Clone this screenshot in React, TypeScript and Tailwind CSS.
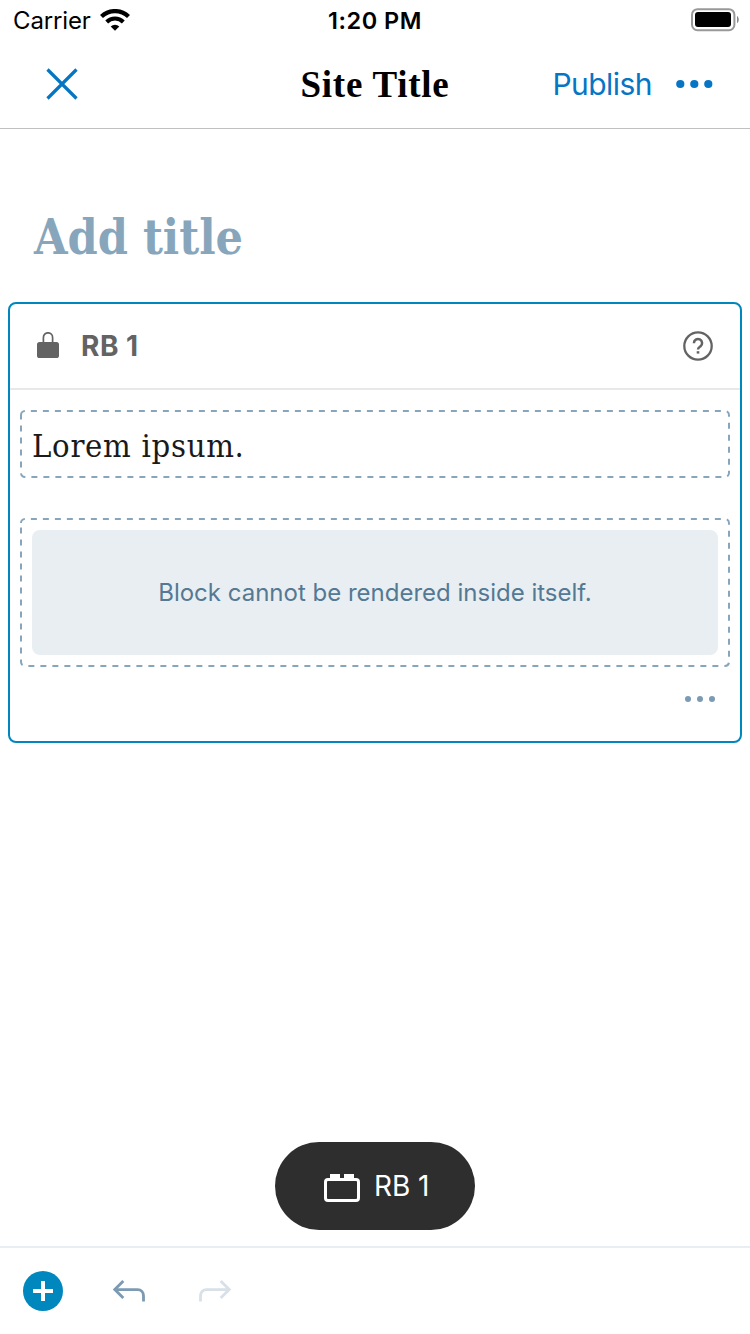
import React from 'react';

function DashedFrame({ width, height }: { width: number; height: number }) {
  const r = 4;
  const d = `M1 ${1 + r}a${r} ${r} 0 0 1 ${r} ${-r}H${width - 1 - r}a${r} ${r} 0 0 1 ${r} ${r}V${height - 1 - r}a${r} ${r} 0 0 1 ${-r} ${r}H${1 + r}a${r} ${r} 0 0 1 ${-r} ${-r}Z`;
  return (
    <svg className="pointer-events-none absolute inset-0" width={width} height={height} fill="none">
      <path d={d} stroke="#87a6bc" strokeWidth="2" strokeDasharray="6 6" />
    </svg>
  );
}

function StatusBar() {
  return (
    <div className="grid h-10 grid-cols-3 items-center pl-[13px] pr-[11px] text-black">
      <div className="flex items-center">
        <span className="w-[87px] pt-[2px] text-[24px] leading-[38px] tracking-[-0.15px]">Carrier</span>
        <svg width="30" height="22" viewBox="0 0 30 22" fill="none" stroke="#000">
          <path d="M1.5 7.6A19.2 19.2 0 0 1 28.5 7.6" strokeWidth="4.2" />
          <path d="M6.7 13A11.7 11.7 0 0 1 23.3 13" strokeWidth="4" />
          <path d="M15 21.8 10.7 17.5A6.1 6.1 0 0 1 19.3 17.5Z" fill="#000" stroke="none" />
        </svg>
      </div>
      <div className="pr-[2px] pt-[2px] text-center text-[23.5px] font-semibold leading-[38px] tracking-[0.5px]">1:20 PM</div>
      <div className="flex justify-end">
        <svg width="48" height="24" viewBox="0 0 48 24" fill="none">
          <rect x="1" y="1.2" width="42.4" height="21" rx="5.5" stroke="#999" strokeWidth="2" />
          <rect x="4" y="4" width="36" height="15" rx="3" fill="#000" />
          <path d="M46 8c2.3 1.2 2.3 6 0 7.2z" fill="#888" />
        </svg>
      </div>
    </div>
  );
}

function NavBar() {
  return (
    <header className="grid h-[89px] grid-cols-[1fr_auto_1fr] items-center border-b border-[#c0c0c0] pl-[37px] pr-[37px]">
      <button className="flex pl-[9px]" aria-label="Close">
        <svg width="32" height="32" viewBox="0 0 32 32" fill="none" stroke="#0675c4" strokeWidth="3.2">
          <path d="M1.5 1.5 30.5 30.5M30.5 1.5 1.5 30.5" />
        </svg>
      </button>
      <h1 className="whitespace-nowrap pt-[2px] font-['Liberation_Serif',serif] text-[37px] font-bold leading-[48px] tracking-[0.75px] text-black">
        Site Title
      </h1>
      <div className="flex items-center justify-end gap-[24px] text-[#0675c4]">
        <button className="text-[30px] leading-[40px] tracking-[-0.55px]">Publish</button>
        <svg width="37" height="10" viewBox="0 0 37 10" fill="currentColor">
          <circle cx="4.3" cy="5" r="4.1" />
          <circle cx="18.3" cy="5" r="4.1" />
          <circle cx="32.3" cy="5" r="4.1" />
        </svg>
      </div>
    </header>
  );
}

function ReusableBlock() {
  return (
    <section className="mx-2 mt-[29px] flex h-[441px] flex-col rounded-[8px] border-2 border-[#0087be]">
      <div className="flex h-[86px] items-center border-b-2 border-[#e8e8e8] pl-[27px] pr-[27px] text-[#636363]">
        <svg className="mb-[2px]" width="22" height="26" viewBox="0 0 22 26" fill="none">
          <path d="M6.4 11V5.4a4.6 4.6 0 0 1 4.6-4.6 4.6 4.6 0 0 1 4.6 4.6V11" stroke="currentColor" strokeWidth="1.7" />
          <rect y="10" width="22" height="16" rx="2.6" fill="currentColor" />
        </svg>
        <span className="ml-[22px] flex-1 text-[28px] font-bold leading-[40px] tracking-[0.5px]">RB 1</span>
        <svg width="30" height="30" viewBox="0 0 30 30" fill="none" stroke="currentColor">
          <circle cx="15" cy="15" r="13.7" strokeWidth="2.3" />
          <path d="M10.9 12.2a4.1 4.1 0 1 1 6.5 3.2c-1.5 1-2.4 1.5-2.4 3.2" strokeWidth="2.5" />
          <path d="M13.7 20.2h2.6v2.4h-2.6z" fill="currentColor" stroke="none" />
        </svg>
      </div>
      <div className="flex flex-col px-[10px] pt-[20px]">
        <div className="relative h-[68px] w-[710px] pl-3">
          <DashedFrame width={710} height={68} />
          <p className="font-['DejaVu_Serif_Condensed','DejaVu_Serif',serif] text-[32.5px] leading-[72px] tracking-[0.7px] text-[#1a1a1a]">
            Lorem ipsum.
          </p>
        </div>
        <div className="relative mt-[40px] h-[149px] w-[710px] p-3">
          <DashedFrame width={710} height={149} />
          <div className="flex h-[125px] items-center justify-center rounded-[8px] bg-[#e9eef2]">
            <span className="text-[24px] leading-[32px] text-[#537994]">
              Block cannot be rendered inside itself.
            </span>
          </div>
        </div>
        <div className="mt-[28px] flex justify-end pr-[14px]">
          <svg width="32" height="8" viewBox="0 0 32 8" fill="#7b9ab3">
            <circle cx="4" cy="4" r="3" />
            <circle cx="16" cy="4" r="3" />
            <circle cx="28" cy="4" r="3" />
          </svg>
        </div>
      </div>
    </section>
  );
}

function Toolbar() {
  return (
    <footer className="flex h-[88px] items-center border-t-2 border-[#e9eef2] pl-[23px]">
      <button aria-label="Add block">
        <svg width="40" height="40" viewBox="0 0 40 40">
          <circle cx="20" cy="20" r="20" fill="#0087be" />
          <path d="M20 10v20M10 20h20" stroke="#fff" strokeWidth="4" />
        </svg>
      </button>
      <button className="ml-[50px]" aria-label="Undo">
        <svg width="32" height="24" viewBox="0 0 32 24" fill="none" stroke="#7b9ab3" strokeWidth="2.8">
          <path d="M10.3 2 1.8 10.5 10.3 19" />
          <path d="M2 10.7h22.5c3.8 0 6 2.7 6 6.3v5.5" />
        </svg>
      </button>
      <button className="ml-[54px]" aria-label="Redo">
        <svg width="32" height="24" viewBox="0 0 32 24" fill="none" stroke="#d8e0e8" strokeWidth="2.8">
          <path d="M21.7 2 30.2 10.5 21.7 19" />
          <path d="M30 10.7H7.5c-3.8 0-6 2.7-6 6.3v5.5" />
        </svg>
      </button>
    </footer>
  );
}

export default function App() {
  return (
    <div className="flex h-[1334px] w-[750px] flex-col bg-white font-['Inter','Liberation_Sans',sans-serif]">
      <StatusBar />
      <NavBar />
      <main className="flex flex-1 flex-col">
        <h2 className="mt-[72px] pl-[34px] font-['DejaVu_Serif_Condensed','DejaVu_Serif',serif] text-[48px] font-bold leading-[72px] text-[#87a6bc]">
          Add title
        </h2>
        <ReusableBlock />
        <div className="mb-[16px] mt-auto flex h-[88px] w-[200px] items-center gap-[14px] self-center rounded-full bg-[#2e2e2e] pl-[49px] text-white">
          <svg className="mt-[4px]" width="36" height="28" viewBox="0 0 36 28" fill="none">
            <rect x="1.5" y="5.5" width="33" height="21" rx="2.5" stroke="#fff" strokeWidth="3" />
            <path d="M6 0h10v5H6zM20 0h10v5H20z" fill="#fff" />
          </svg>
          <span className="text-[28px] leading-[40px] tracking-[-0.1px]">RB 1</span>
        </div>
      </main>
      <Toolbar />
    </div>
  );
}
